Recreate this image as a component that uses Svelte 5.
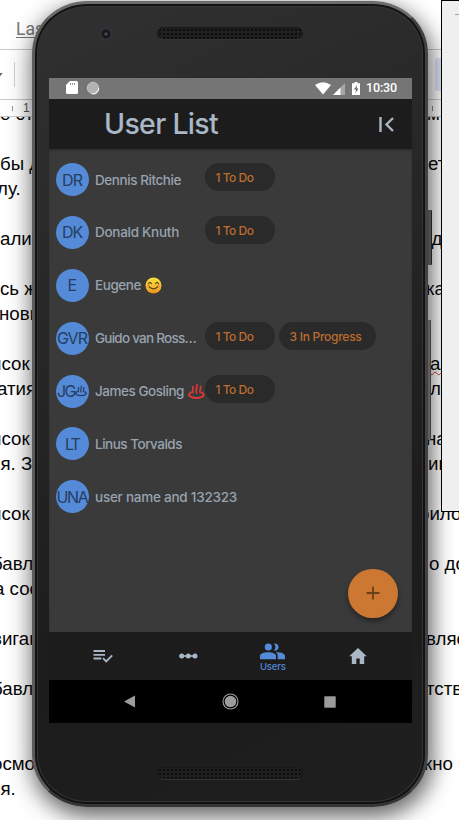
<script>
  const users = [
    { initials: 'DR', iw: 20, name: 'Dennis Ritchie', nw: 86, chips: [['1 To Do', 38, 70]] },
    { initials: 'DK', iw: 20, name: 'Donald Knuth', nw: 84, chips: [['1 To Do', 38, 70]] },
    { initials: 'E', iw: 9, name: 'Eugene', nw: 46, icon: 'smile', chips: [] },
    { initials: 'GVR', iw: 30, name: 'Guido van Ross…', nw: 101, chips: [['1 To Do', 38, 70], ['3 In Progress', 72, 97]] },
    { initials: 'JG', iw: 18, steam: true, name: 'James Gosling', nw: 89, icon: 'springs', chips: [['1 To Do', 38, 70]] },
    { initials: 'LT', iw: 14, name: 'Linus Torvalds', nw: 87, chips: [] },
    { initials: 'UNA', iw: 31, name: 'user name and 132323', nw: 142, chips: [] }
  ];

  // [text, horizontal offset] for every 25px line of the document
  const left = [
    ['о ст', 0], null, ['бы д', 0], ['лу.', -3], null, ['али', 0], null, ['сь ж', 0], ['новы', -1], null,
    ['исок', -9], ['атия', -3], null, ['исок', -9], ['ия. З', -10], null, ['исок', -9], null,
    ['бавле', -8], ['а соо', -6], null, ['вигац', -8], null, ['бавле', -8], null, null, ['осмо', -8], ['ия.', -10]
  ];
  const right = [
    ['м', 0], null, ['ет', 1], null, null, ['ад', -6], null, ['ка', -1], null, null,
    ['ал', 3], ['л', 3], null, ['на', -1], ['ии', 1], null, ['рило', -8], null,
    ['о до', 2], null, null, ['вляе', -1], null, ['тств', -1], null, null, ['кно в', -3], null
  ];

  // Tracks a label out (or in) until it takes the given width
  function fit(node, width) {
    const extra = (width - node.getBoundingClientRect().width) / node.textContent.length;
    node.style.letterSpacing = extra + 'px';
  }
</script>

{#snippet springs()}
  <g fill="none" stroke="currentColor" stroke-linecap="round" stroke-width="1.7">
    <path d="M5 9.500c-1.500-2 .7-3.300 0-6M8.600 10c-1.700-2.800 1.200-5 .3-8.500M12.200 9.500c-1.300-2 1-3.500.3-6" />
    <path d="M3 9.300C-1.500 12.500 3 15 8.300 15s9.800-2.300 5.800-5.500" stroke-width="2" />
  </g>
{/snippet}

<div class="page">
  <div class="doc">
    <div class="menu"><u>Last</u></div>
    <div class="tools"><i class="caret"></i><i class="sep"></i><i class="active"></i></div>
    <div class="ruler"><i></i><span>1</span><b></b></div>
    <div class="lines">
      {#each left as l, i}
        <div class="line">
          <span class="l" style="margin-left:{l ? l[1] : 0}px">{l ? l[0] : ''}</span>
          <span class="r" class:typo={i === 10} style="margin-left:{right[i] ? right[i][1] : 0}px">{right[i] ? right[i][0] : ''}</span>
        </div>
      {/each}
    </div>
  </div>

  <i class="key power"></i>
  <i class="key volume"></i>

  <div class="phone">
    <div class="top"><i class="camera"></i><i class="grille"></i></div>
    <div class="screen">
      <div class="status">
        <svg width="12" height="14" viewBox="0 0 12 14"><path d="M4 0h6.500Q12 0 12 1.500v10Q12 13 10.500 13h-9Q0 13 0 11.500V4z" fill="#fff" /><path d="M4.500 2v2M6.500 2v2M8.500 2v2" stroke="#999" stroke-width="1" /></svg>
        <svg class="ball" width="14" height="14" viewBox="0 0 14 14"><circle cx="7" cy="7" r="5.700" fill="#b2b2b2" stroke="#c4c4c4" /><path d="M12.700 7A5.700 5.700 0 0 1 6 12.700" fill="none" stroke="#eee" stroke-width="1.200" /></svg>
        <span class="space"></span>
        <svg width="16" height="13" viewBox="0 0 16 13"><path d="M0 3Q8-2.500 16 3L8 12.500z" fill="#fff" /></svg>
        <svg class="signal" width="12" height="12" viewBox="0 0 12 12"><path d="M12 0v12H0z" fill="#a5a5a5" /><path d="M7.500 4.500V12H0z" fill="#fff" /></svg>
        <svg class="battery" width="8" height="13" viewBox="0 0 8 13"><path d="M2.500 0h3v1.300H8V13H0V1.300h2.500z" fill="#fff" /><path d="M5 3L2 7.500h2L3.500 11l3-4.500h-2z" fill="#666" /></svg>
        <span class="time"><span use:fit={31}>10:30</span></span>
      </div>

      <header>
        <h1 use:fit={114}>User List</h1>
        <svg width="16" height="15" viewBox="0 0 16 15" fill="none" stroke="#a9b7c6" stroke-width="2.400"><path d="M1.500 0v15M14 1L7.500 7.500 14 14" /></svg>
      </header>

      <main>
        {#each users as u}
          <div class="user">
            <div class="avatar">
              <span use:fit={u.iw}>{u.initials}</span>
              {#if u.steam}<svg width="12" height="12" viewBox="0 0 17 17">{@render springs()}</svg>{/if}
            </div>
            <div class="name">
              <span use:fit={u.nw}>{u.name}</span>
              {#if u.icon === 'smile'}
                <svg width="17" height="17" viewBox="0 0 17 17">
                  <defs><linearGradient id="face" x1="0" y1="0" x2="0" y2="1"><stop offset="0" stop-color="#f8dc3c" /><stop offset=".55" stop-color="#f5c52c" /><stop offset="1" stop-color="#e58a20" /></linearGradient></defs>
                  <circle cx="8.500" cy="8.500" r="8" fill="url(#face)" />
                  <circle cx="3.300" cy="9" r="1.800" fill="#ef7d45" opacity=".65" /><circle cx="13.700" cy="9" r="1.800" fill="#ef7d45" opacity=".65" />
                  <path d="M3.500 6.700q1.500-2.600 3 0M10.500 6.700q1.500-2.600 3 0M4.500 10q4 3.700 8 0" fill="none" stroke="#5f4520" stroke-width="1.200" stroke-linecap="round" />
                </svg>
              {:else if u.icon === 'springs'}
                <svg class="red" width="17" height="17" viewBox="0 0 17 17">{@render springs()}</svg>
              {/if}
            </div>
            {#each u.chips as c}
              <div class="chip" style="width:{c[2]}px"><span use:fit={c[1]}>{c[0]}</span></div>
            {/each}
          </div>
        {/each}
        <button class="fab" aria-label="Add user"><svg width="14" height="14" viewBox="0 0 14 14"><path d="M7 .5v13M.5 7h13" stroke="#664018" stroke-width="1.800" /></svg></button>
      </main>

      <nav>
        <div class="tab"><svg width="20" height="14" viewBox="0 0 20 14" fill="none" stroke="#a9b7c6" stroke-width="1.800"><path d="M.5 2h11.500M.5 5.800h11.500M.5 9.500h7.800" /><path d="M10 9.200l3.200 3.300 6-6.200" /></svg></div>
        <div class="tab"><svg width="19" height="6" viewBox="0 0 19 6" fill="#a9b7c6"><path d="M2 2.200h14v1.600H2z" /><circle cx="2.700" cy="3" r="2.500" /><circle cx="9.300" cy="3" r="2.500" /><circle cx="16" cy="3" r="2.500" /></svg></div>
        <div class="tab on"><svg width="25" height="17" viewBox="0 0 25 17" fill="#548ad8"><circle cx="8.300" cy="4" r="3.600" /><path d="M14 .6a3.600 3.600 0 1 1 0 6.900 5.500 5.500 0 0 0 0-6.900zM0 16.300V13c0-5 16-5 16 0v3.300zM17.700 16.300V13c0-1.700-.7-2.700-2-3.700 4-.5 9.300.8 9.300 3.700v3.300z" /></svg><span use:fit={26}>Users</span></div>
        <div class="tab"><svg width="18" height="16" viewBox="0 0 18 16" fill="#a9b7c6"><path d="M9 0l8.800 8.200h-2.600V16h-4.500v-5.500H7.300V16H2.800V8.200H.2z" /></svg></div>
      </nav>
      <div class="system">
        <svg width="12" height="13" viewBox="0 0 12 13"><path d="M0 6.500L11 .5v12z" fill="#9c9c9c" /></svg>
        <svg width="17" height="17" viewBox="0 0 17 17"><circle cx="8.500" cy="8.500" r="7.500" fill="none" stroke="#9c9c9c" stroke-width="1.100" /><circle cx="8.500" cy="8.500" r="5.800" fill="#9c9c9c" /></svg>
        <svg width="12" height="12" viewBox="0 0 12 12"><path d="M.3.300h11.400v11.400H.3z" fill="#9c9c9c" /></svg>
      </div>
    </div>
    <div class="bottom"><i class="grille"></i></div>
  </div>

  <div class="window"><i></i></div>
</div>

<style>
  :global(body) { margin: 0; }
  .page { position: relative; width: 459px; height: 820px; overflow: hidden; background: #fff; font-family: Inter, "Noto Sans", sans-serif; }
  .page * { box-sizing: border-box; }
  svg { display: block; flex: none; overflow: visible; }

  .doc { display: flex; flex-direction: column; height: 820px; overflow: hidden; }
  .menu { height: 50px; flex: none; padding: 18px 0 0 16px; font: 17.500px/22px Roboto, "Liberation Sans", sans-serif; color: #777; border-bottom: 1px solid #c9c9cb; }
  .menu u { text-underline-offset: 2px; text-decoration-thickness: 1px; }
  .tools { height: 50px; flex: none; display: flex; align-items: center; border-bottom: 1px solid #c9c9cb; }
  .caret { width: 3px; height: 4px; background: #666; clip-path: polygon(0 0, 100% 0, 0 100%); }
  .sep { width: 1px; height: 25px; margin-left: 11px; background: #ccd0d8; }
  .active { width: 24px; height: 33px; margin-left: auto; border-radius: 3px; background: #dde4f8; }
  .ruler { height: 17px; flex: none; display: flex; align-items: center; border-bottom: 1px solid #c9ccd2; background: #fff; position: relative; font: 12px/14px "Liberation Sans", Arial, sans-serif; color: #555; }
  .ruler i { width: 1px; height: 5px; margin-left: 12px; background: #999; }
  .ruler span { margin-left: 10px; }
  .ruler b { width: 1px; height: 5px; background: #888; margin-left: auto; margin-right: 26px; }
  .lines { margin-top: -16px; font: 18.700px/25px "Liberation Sans", Arial, sans-serif; color: #080808; }
  .line { display: flex; height: 25px; white-space: nowrap; }
  .line:first-child { clip-path: inset(16px 0 0 0); }
  .l { width: 90px; flex: none; }
  .r { position: absolute; left: 427px; }
  .typo { text-decoration: underline wavy #c33 1px; }

  .key { position: absolute; left: 424px; width: 8px; background: #777; border-right: 1px solid #333; border-radius: 1px; }
  .power { top: 210px; height: 55px; }
  .volume { top: 320px; height: 120px; width: 7px; background: #999; border-right-color: #666; }

  .phone {
    position: absolute; left: 32px; top: 1px; width: 396px; height: 806px; padding: 0 13px 0 14px;
    display: flex; flex-direction: column; border-radius: 55px / 52px;
    background: linear-gradient(155deg, #303031 0%, #2b2b2b 20%, #222 50%, #1c1c1d 70%, #1f1f20 100%);
    border: 3px solid #4d4d4d; border-top-color: #6c6c6c; border-bottom-color: #353535; border-left-color: #5c5c5c; border-right-color: #444142;
    box-shadow: inset 0 0 0 2px #121212, inset 0 0 0 3px #353535, 0 7px 24px rgba(0, 0, 0, .52), 6px 8px 20px rgba(0, 0, 0, .25);
  }
  .top { height: 74px; flex: none; position: relative; display: flex; justify-content: center; padding-top: 23px; }
  .camera { position: absolute; left: 50px; top: 23px; width: 14px; height: 14px; border-radius: 50%; background: radial-gradient(circle, #5b4755 0 1px, #18161f 2px 4px, #323235 5px); }
  .grille { width: 146px; height: 13px; margin-right: 1px; border-radius: 7px; border: 1px solid #181818; border-bottom-color: #343434; background: radial-gradient(circle, #0b0b0b .7px, #202020 1.400px) 0 0 / 4px 4px; }
  .bottom { flex: 1; display: flex; justify-content: center; padding-top: 44px; }
  .screen { width: 363px; height: 645px; flex: none; display: flex; flex-direction: column; }

  .status { height: 21px; flex: none; display: flex; align-items: center; padding: 0 14px 1px 17px; background: #757575; }
  .ball { margin-left: 8px; }
  .space { flex: 1; }
  .signal { margin-left: 2px; margin-top: 1px; }
  .battery { margin-left: 7px; }
  .time { width: 32px; margin-left: 6px; font: 500 12.500px/20px Roboto, sans-serif; color: #fff; white-space: nowrap; }
  .time span { display: inline-block; }

  header { height: 50px; flex: none; display: flex; align-items: center; justify-content: space-between; padding: 0 17px 0 55px; background: #1c1c1c; }
  h1 { margin: 0; white-space: nowrap; font-size: 28.500px; line-height: 44px; font-weight: 500; color: #a9b7c6; }
  main { position: relative; flex: 1; padding: 14px 0 0 7px; background: #3a3a3a; box-shadow: inset 0 2px 2px #303030; }
  .user { display: flex; height: 52.900px; }
  .avatar { width: 33px; height: 33px; flex: none; display: flex; align-items: center; justify-content: center; border-radius: 50%; background: #548ad8; color: #263e60; font-size: 16px; white-space: nowrap; margin-left: -.5px; }
  .avatar span { display: block; }
  .name { width: 110px; height: 33px; flex: none; display: flex; align-items: center; gap: 4px; margin: 0 0 0 6.500px; color: #97a3b0; font-size: 13.500px; font-weight: 500; white-space: nowrap; }
  .name span { display: block; flex: none; }
  .red { color: #df3836; }
  .chip { height: 28px; flex: none; margin-right: 4px; padding-left: 10.500px; border-radius: 14px; background: #2a2a2a; color: #bd6d2e; font-size: 12px; line-height: 29px; font-weight: 500; white-space: nowrap; }
  .chip span { display: inline-block; }
  .fab { position: absolute; right: 14.500px; bottom: 14px; width: 49.500px; height: 49.500px; padding: 0; border: 0; border-radius: 50%; display: flex; align-items: center; justify-content: center; background: #cc7832; box-shadow: 0 3px 5px rgba(0, 0, 0, .4); }

  nav { height: 48px; flex: none; display: flex; padding: 0 12px; background: #1c1c1c; }
  .tab { flex: 1; display: flex; flex-direction: column; align-items: center; justify-content: center; }
  .on { color: #548ad8; font-size: 9.500px; line-height: 12px; font-weight: 500; padding-top: 3px; }
  .on span { display: block; white-space: nowrap; margin-top: 1px; }
  .system { height: 43px; flex: none; display: flex; align-items: center; justify-content: space-between; padding: 0 76px 0 75px; background: #000; }

  .window { position: absolute; left: 441px; top: 0; width: 30px; height: 512px; border: 1px solid #000; background: #efefef; }
  .window i { display: block; width: 8px; height: 1px; margin: 13px 0 0 13px; background: #9aa8b5; }
</style>
